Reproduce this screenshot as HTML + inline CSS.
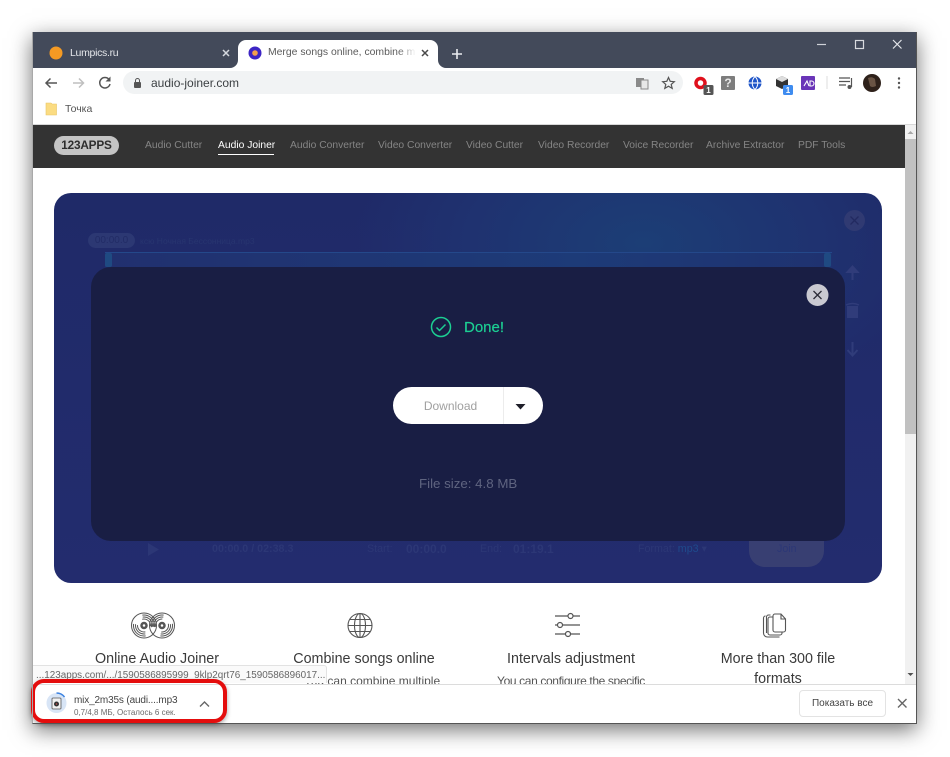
<!DOCTYPE html>
<html><head><meta charset="utf-8">
<style>
html,body{margin:0;padding:0;width:950px;height:757px;overflow:hidden;background:#fff;font-family:"Liberation Sans","Noto Sans CJK SC",sans-serif}
.a{position:absolute;white-space:nowrap}
svg{position:absolute;overflow:visible}
.nav{position:absolute;top:139px;font-size:10.3px;line-height:13px;color:#858585;white-space:nowrap}
.t{position:absolute;font-size:14.3px;line-height:20px;color:#3a3a3a;text-align:center;white-space:nowrap}
.g{position:absolute;font-size:10.7px;line-height:13px;white-space:nowrap;color:#2c3776;font-weight:bold}
</style></head>
<body>
<div class="a" style="left:32px;top:32px;width:885px;height:692px;background:#fff;box-shadow:0 6px 20px rgba(0,0,0,.55)"></div>

<!-- title bar -->
<div class="a" style="left:32px;top:32px;width:885px;height:36px;background:#434a5a"></div>
<div class="a" style="left:238px;top:40px;width:200px;height:28px;background:#fff;border-radius:8px 8px 0 0"></div>
<svg style="left:0;top:0" width="950" height="757">
 <path d="M230 68a8 8 0 0 0 8-8v8zM446 68a8 8 0 0 1-8-8v8z" fill="#fff"/>
 <circle cx="56" cy="53" r="6.500" fill="#f59a23"/>
 <circle cx="255" cy="53" r="6.500" fill="#3d25c4"/>
 <circle cx="255" cy="53" r="2.800" fill="#f4a04c"/>
 <path d="M223 50l6 6M229 50l-6 6" stroke="#d5d8de" stroke-width="1.500" fill="none"/>
 <path d="M422 50l6 6M428 50l-6 6" stroke="#4a4a4a" stroke-width="1.500" fill="none"/>
 <path d="M457 49v10M452 54h10" stroke="#e9ebef" stroke-width="1.600" fill="none"/>
 <path d="M817 44.500h9" stroke="#cfd2d8" stroke-width="1.200"/>
 <rect x="855.500" y="40.500" width="8" height="8" fill="none" stroke="#d8dade" stroke-width="1.200"/>
 <path d="M893 40l8.500 8.500M901.500 40l-8.500 8.500" stroke="#e4e6ea" stroke-width="1.200"/>

 <!-- nav -->
 <path d="M57 83H46M50.500 78.500L46 83l4.500 4.500" stroke="#555" stroke-width="1.500" fill="none"/>
 <path d="M73 83h10.500M79 78.500l4.500 4.500-4.500 4.500" stroke="#bfbfbf" stroke-width="1.500" fill="none"/>
 <path d="M109 79.500a5.200 5.200 0 1 0 1 4.500" stroke="#555" stroke-width="1.500" fill="none"/>
 <path d="M110.500 76.500v5h-5z" fill="#555"/>
</svg>
<div class="a" style="left:70px;top:46px;font-size:10.500px;line-height:14px;letter-spacing:-.3px;color:#e3e5e9">Lumpics.ru</div>
<div class="a" style="left:268px;top:46px;width:148px;overflow:hidden;font-size:10.400px;line-height:14px;color:#5b5b5b">Merge songs online, combine mp3</div>
<div class="a" style="left:398px;top:44px;width:18px;height:18px;background:linear-gradient(90deg,rgba(255,255,255,0),#fff)"></div>

<!-- toolbar -->
<div class="a" style="left:123px;top:71px;width:560px;height:23px;border-radius:12px;background:#f1f3f4"></div>
<div class="a" style="left:151px;top:76px;font-size:12px;line-height:15px;color:#3c4043">audio-joiner.com</div>
<svg style="left:0;top:0" width="950" height="757">
 <rect x="134" y="82" width="7" height="6" rx="1" fill="#555"/>
 <path d="M135.500 82v-1.500a2 2 0 0 1 4 0V82" stroke="#555" stroke-width="1" fill="none"/>
 <rect x="636" y="78" width="8" height="9" fill="#8a8a8a"/>
 <rect x="641" y="80" width="7" height="9" fill="#e8e8e8" stroke="#8a8a8a" stroke-width="1"/>
 <path d="M668.500 77.500l1.700 3.800 4.100.4-3.100 2.700 1 4-3.700-2.200-3.700 2.200 1-4-3.100-2.700 4.100-.4z" fill="none" stroke="#555" stroke-width="1.200"/>
 <circle cx="700.500" cy="83" r="4.500" fill="none" stroke="#e0101c" stroke-width="3.500"/>
 <rect x="703.500" y="85" width="10" height="10" rx="1.500" fill="#555"/>
 <rect x="721" y="76" width="14" height="14" rx="1" fill="#7d7d7d"/>
 <circle cx="755" cy="83" r="6.500" fill="#1f55c8"/>
 <path d="M748.500 83h13M755 76.500a9 9 0 0 0 0 13M755 76.500a9 9 0 0 1 0 13" stroke="#fff" stroke-width="1" fill="none"/>
 <path d="M776 79l6-3 6 3v7l-6 3-6-3z" fill="#333"/>
 <path d="M776 79l6 3 6-3-6-3z" fill="#ddd"/>
 <rect x="783" y="85" width="10" height="10" rx="1.500" fill="#3f8cf0"/>
 <rect x="801" y="76" width="14" height="14" rx="1" fill="#6a35b8"/>
 <path d="M804 86l3-5 2 5M810 81h1.500a2.500 2.500 0 0 1 0 5H810z" stroke="#fff" stroke-width="1.100" fill="none"/>
 <path d="M827 76v13" stroke="#dcdcdc" stroke-width="1"/>
 <path d="M839 78h11M839 81.500h11M839 85h7" stroke="#555" stroke-width="1.200"/>
 <path d="M851.500 78v9" stroke="#555" stroke-width="1.200"/>
 <circle cx="849.500" cy="87" r="2" fill="#555"/>
 <circle cx="872" cy="83" r="9" fill="#2e211a"/>
 <path d="M868 78q4-2 7 1l1 7q-4 2-6 0z" fill="#6a5444"/>
 <circle cx="899" cy="78.500" r="1.200" fill="#555"/><circle cx="899" cy="83" r="1.200" fill="#555"/><circle cx="899" cy="87.500" r="1.200" fill="#555"/>
 <!-- bookmark folder -->
 <path d="M46 103h5l1 1h4.500v11H46z" fill="#fbdc82" stroke="#e8c566" stroke-width=".6"/>
</svg>
<div class="a" style="left:704px;top:86px;width:9px;text-align:center;font-size:8px;line-height:9px;color:#fff;font-weight:bold">1</div>
<div class="a" style="left:721px;top:76px;width:14px;text-align:center;font-size:12px;line-height:14px;color:#e8e8e8;font-weight:bold">?</div>
<div class="a" style="left:783px;top:86px;width:10px;text-align:center;font-size:8px;line-height:9px;color:#fff;font-weight:bold">1</div>
<div class="a" style="left:65px;top:103px;font-size:10.500px;line-height:13px;color:#555">Точка</div>

<!-- page -->
<div class="a" style="left:33px;top:125px;width:872px;height:559px;overflow:hidden;background:#fff">
 <div class="a" style="left:0;top:0;width:872px;height:43px;background:#333"></div>
</div>
<div class="a" style="left:32px;top:124px;width:885px;height:1px;background:#d8d8d8"></div>
<div class="a" style="left:54px;top:136px;width:65px;height:19px;border-radius:10px;background:#c4c4c4;text-align:center;font-size:11.800px;line-height:19px;color:#2d2d2d;font-weight:bold;letter-spacing:-.2px">123APPS</div>
<div class="nav" style="left:145px">Audio Cutter</div>
<div class="nav" style="left:218px;color:#fff">Audio Joiner</div>
<div class="a" style="left:218px;top:154px;width:56px;height:1px;background:#fff"></div>
<div class="nav" style="left:290px">Audio Converter</div>
<div class="nav" style="left:378px">Video Converter</div>
<div class="nav" style="left:466px">Video Cutter</div>
<div class="nav" style="left:538px">Video Recorder</div>
<div class="nav" style="left:623px">Voice Recorder</div>
<div class="nav" style="left:706px">Archive Extractor</div>
<div class="nav" style="left:798px">PDF Tools</div>

<!-- scrollbar -->
<div class="a" style="left:905px;top:125px;width:11px;height:559px;background:#f1f1f1"></div>
<div class="a" style="left:905px;top:139px;width:11px;height:295px;background:#c1c1c1"></div>
<svg style="left:0;top:0" width="950" height="757">
 <path d="M907.500 134l3-3 3 3z" fill="#a8a8a8"/>
 <path d="M907.500 673l3 3 3-3z" fill="#505050"/>
</svg>

<!-- main panel -->
<div class="a" style="left:54px;top:193px;width:828px;height:390px;border-radius:17px;background:radial-gradient(ellipse 290px 170px at 590px 50px,#1c3e76 0%,#1f3270 60%,rgba(31,44,104,0) 100%),linear-gradient(180deg,#1f2a68,#232c6e)"></div>
<div class="a" style="left:88px;top:233px;width:47px;height:15px;border-radius:8px;background:#2c3873;font-size:10px;line-height:15px;text-align:center;color:#222c66">00:00.0</div>
<div class="g" style="left:140px;top:235px;font-weight:normal;font-size:8.500px;color:#283570">ксю Ночная Бессонница.mp3</div>
<div class="a" style="left:105px;top:252px;width:727px;height:15px;background:linear-gradient(90deg,#21306f,#1d3b78 65%,#1f3270);border-top:1px solid #24488a;box-sizing:border-box"></div>
<div class="a" style="left:105px;top:253px;width:7px;height:14px;background:#1f4a82;border-radius:2px"></div>
<div class="a" style="left:824px;top:253px;width:7px;height:14px;background:#1f4a82;border-radius:2px"></div>
<svg style="left:0;top:0" width="950" height="757">
 <circle cx="854.500" cy="220.500" r="10.500" fill="#303a72"/>
 <path d="M850.500 216.500l8 8M858.500 216.500l-8 8" stroke="#222a60" stroke-width="1.300"/>
 <path d="M852.500 280v-12M847.500 272l5-5.500 5 5.500z" stroke="#303c7a" stroke-width="2" fill="#303c7a"/>
 <rect x="847" y="306" width="11" height="12" fill="#303c7a"/>
 <path d="M846 305q6.500-3 13 0" stroke="#303c7a" stroke-width="1.500" fill="none"/>
 <path d="M852.500 342v12M847.500 350l5 5.500 5-5.500" stroke="#303c7a" stroke-width="2" fill="none"/>
 <path d="M148 543l11 6.500-11 6.500z" fill="#2c3776"/>
</svg>
<div class="g" style="left:212px;top:543px">00:00.0 / 02:38.3</div>
<div class="g" style="left:367px;top:543px;font-weight:normal">Start:</div>
<div class="g" style="left:406px;top:543px;font-size:12px">00:00.0</div>
<div class="g" style="left:480px;top:543px;font-weight:normal">End:</div>
<div class="g" style="left:513px;top:543px;font-size:12px">01:19.1</div>
<div class="g" style="left:638px;top:543px;font-weight:normal">Format: <span style="color:#1f4a8c">mp3</span> ▾</div>
<div class="a" style="left:749px;top:530px;width:75px;height:37px;border-radius:0 0 16px 16px;background:#383f72"></div>
<div class="g" style="left:777px;top:543px;font-weight:normal">Join</div>

<!-- modal -->
<div class="a" style="left:91px;top:267px;width:754px;height:274px;border-radius:20px;background:#191e44"></div>
<div class="a" style="left:464px;top:319px;font-size:15px;line-height:18px;color:#1ccf93;-webkit-text-stroke:.2px #1ccf93">Done!</div>
<div class="a" style="left:393px;top:387px;width:150px;height:37px;border-radius:19px;background:#fff"></div>
<div class="a" style="left:503px;top:387px;width:1px;height:37px;background:#ececec"></div>
<div class="a" style="left:393px;top:399px;width:115px;text-align:center;font-size:12px;line-height:15px;color:#a0a0a0">Download</div>
<div class="a" style="left:419px;top:475px;font-size:13.300px;line-height:17px;color:#5f6480">File size: 4.8 MB</div>
<svg style="left:0;top:0" width="950" height="757">
 <circle cx="817.500" cy="295" r="11" fill="#c9c9d1"/>
 <path d="M813.500 291l8 8M821.500 291l-8 8" stroke="#2c2c38" stroke-width="1.300"/>
 <circle cx="441" cy="327" r="9.500" fill="none" stroke="#1ccf93" stroke-width="1.500"/>
 <path d="M436.500 327.500l3 3 6-6" fill="none" stroke="#1ccf93" stroke-width="1.500"/>
 <path d="M515.500 404h10l-5 5.500z" fill="#1f1f2a"/>
</svg>

<!-- features -->
<svg style="left:0;top:0" width="950" height="757" fill="none" stroke="#555">
 <g stroke-width="1">
  <circle cx="144" cy="625.500" r="12.500"/>
  <circle cx="144" cy="625.500" r="10.500" pathLength="100" stroke-dasharray="30 20" transform="rotate(-99 144 625.500)"/>
  <circle cx="144" cy="625.500" r="8.500" pathLength="100" stroke-dasharray="30 20" transform="rotate(-99 144 625.500)"/>
  <circle cx="144" cy="625.500" r="6.500" pathLength="100" stroke-dasharray="30 20" transform="rotate(-99 144 625.500)"/>
  <circle cx="162" cy="625.500" r="12.500"/>
  <circle cx="162" cy="625.500" r="10.500" pathLength="100" stroke-dasharray="30 20" transform="rotate(-9 162 625.500)"/>
  <circle cx="162" cy="625.500" r="8.500" pathLength="100" stroke-dasharray="30 20" transform="rotate(-9 162 625.500)"/>
  <circle cx="162" cy="625.500" r="6.500" pathLength="100" stroke-dasharray="30 20" transform="rotate(-9 162 625.500)"/>
 </g>
 <circle cx="144" cy="625.500" r="2.500" stroke-width="2.500"/>
 <circle cx="162" cy="625.500" r="2.500" stroke-width="2.500"/>
 <g stroke-width="1.100">
  <circle cx="360" cy="625.500" r="12"/>
  <ellipse cx="360" cy="625.500" rx="5.500" ry="12"/>
  <path d="M360 613.500v24M348 625.500h24M349.500 619.500h21M349.500 631.500h21"/>
 </g>
 <g stroke-width="1.200">
  <path d="M555 616h13M573 616h7M555 625h2.500M563 625h17M555 634h10.500M571 634h9"/>
  <circle cx="570.500" cy="616" r="2.500"/><circle cx="560" cy="625" r="2.500"/><circle cx="568" cy="634" r="2.500"/>
 </g>
 <g stroke-width="1.100">
  <path d="M773 617h-3a2 2 0 0 0-2 2v14a2 2 0 0 0 2 2h10a2 2 0 0 0 2-2v-1"/>
  <path d="M770.500 615h-2a2 2 0 0 0-2 2v16"/>
  <path d="M765.500 616a2 2 0 0 0-2 2v15a4 4 0 0 0 4 4h12"/>
  <path d="M773 616a2 2 0 0 1 2-2h6l4.500 5v11a2 2 0 0 1-2 2h-8.500a2 2 0 0 1-2-2z"/>
  <path d="M781 614v5h4.500"/>
 </g>
</svg>
<div class="a" style="left:33px;top:640px;width:872px;height:44px;overflow:hidden">
 <div class="t" style="left:24px;top:9px;width:200px">Online Audio Joiner</div>
 <div class="t" style="left:231px;top:9px;width:200px">Combine songs online</div>
 <div class="t" style="left:438px;top:9px;width:200px">Intervals adjustment</div>
 <div class="t" style="left:645px;top:9px;width:200px">More than 300 file</div>
 <div class="t" style="left:645px;top:29px;width:200px">formats</div>
 <div class="t" style="left:239px;top:31px;width:200px;font-size:12px;color:#555">You can combine multiple</div>
 <div class="t" style="left:438px;top:31px;width:200px;font-size:12px;letter-spacing:-.37px;color:#555">You can configure the specific</div>
</div>

<!-- download bar -->
<div class="a" style="left:32px;top:684px;width:885px;height:40px;background:#fff;border-top:1px solid #dcdcdc;box-sizing:border-box"></div>
<div class="a" style="left:32px;top:665px;width:295px;height:18px;box-sizing:border-box;padding-left:4px;background:#fafafa;border:1px solid #e2e2e2;border-left:0;border-bottom:0;border-radius:0 3px 0 0;overflow:hidden;font-size:9.900px;line-height:19px;color:#666">...123apps.com/.../1590586895999_9klp2qrt76_1590586896017...</div>

<div class="a" style="left:31px;top:679px;width:196px;height:44px;box-sizing:border-box;border:4px solid #e40d0d;border-radius:13px;box-shadow:0 2px 5px rgba(0,0,0,.35)"></div>
<svg style="left:0;top:0" width="950" height="757">
 <circle cx="56.500" cy="703" r="10" fill="#d8e5f6"/>
 <path d="M56.500 693a10 10 0 0 1 8 4" stroke="#3b82e0" stroke-width="1.500" fill="none"/>
 <rect x="52" y="698" width="9" height="11" rx="1" fill="#f2f2f2" stroke="#555" stroke-width=".8"/>
 <circle cx="56.500" cy="704" r="2.500" fill="#333"/>
 <circle cx="56.500" cy="704" r=".8" fill="#c05050"/>
 <path d="M200 706.500l4.500-4.500 4.500 4.500" stroke="#666" stroke-width="1.400" fill="none"/>
 <path d="M898 699l8.500 8.500M906.500 699l-8.500 8.500" stroke="#666" stroke-width="1.400"/>
</svg>
<div class="a" style="left:74px;top:694px;font-size:10px;line-height:13px;letter-spacing:-.15px;color:#444">mix_2m35s (audi....mp3</div>
<div class="a" style="left:74px;top:707px;font-size:8px;line-height:11px;color:#6a6a6a">0,7/4,8 МБ, Осталось 6 сек.</div>
<div class="a" style="left:799px;top:690px;width:87px;height:27px;box-sizing:border-box;border:1px solid #e3e3e3;border-radius:4px;background:#fff;text-align:center;font-size:10px;line-height:25px;color:#444">Показать все</div>
<div class="a" style="left:32px;top:32px;width:885px;height:692px;box-sizing:border-box;border-left:1px solid #a9a9a9;border-right:1px solid #555;border-bottom:1px solid #555;pointer-events:none"></div>
</body></html>
